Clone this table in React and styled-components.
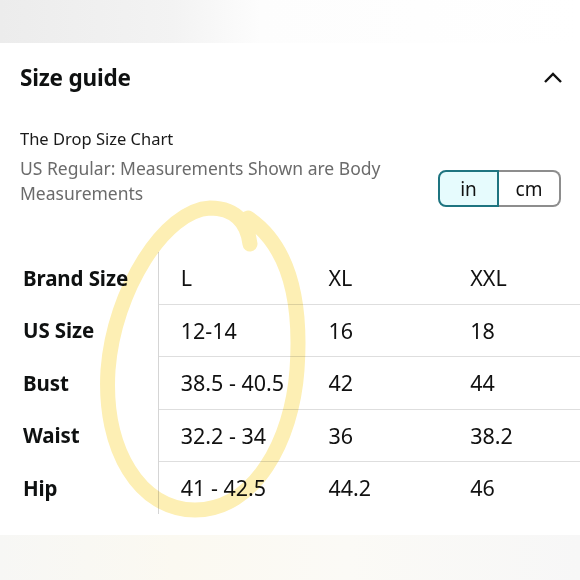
import React from 'react';
import styled, { createGlobalStyle } from 'styled-components';

const GlobalStyle = createGlobalStyle`
  html, body {
    margin: 0;
    padding: 0;
    background: #fff;
  }
  body {
    font-family: "Noto Sans", "Open Sans", Arial, sans-serif;
    color: #111;
  }
`;

const Page = styled.div`
  position: relative;
  width: 580px;
  height: 580px;
  overflow: hidden;
  background: #fff;
`;

const TopBand = styled.div`
  height: 43px;
  background: linear-gradient(90deg, #ececec 0%, #f3f3f3 30%, #fdfdfd 45%, #ffffff 100%);
`;

const BottomBand = styled.div`
  position: absolute;
  left: 0;
  right: 0;
  bottom: 0;
  height: 45px;
  background: linear-gradient(90deg, #f7f7f5 0%, #fbf9f1 30%, #fbfaf6 60%, #f7f7f7 100%);
`;

const HeaderRow = styled.div`
  height: 68px;
  display: flex;
  align-items: center;
  justify-content: space-between;
  padding: 0 16px 0 20px;
`;

const Title = styled.h2`
  margin: 0;
  font-size: 22.5px;
  font-weight: 700;
  color: #0f1111;
  letter-spacing: -0.2px;
`;

const Chevron = styled.svg`
  width: 22px;
  height: 14px;
`;

const InfoRow = styled.div`
  display: flex;
  align-items: flex-start;
  justify-content: space-between;
  padding: 15px 19px 0 20px;
`;

const InfoText = styled.div`
  display: flex;
  flex-direction: column;
  gap: 5px;
`;

const ChartName = styled.div`
  font-size: 16.5px;
  line-height: 25px;
  color: #1a1a1a;
`;

const ChartNote = styled.div`
  width: 390px;
  font-size: 17.5px;
  line-height: 25px;
  color: #6b6b6b;
`;

const Toggle = styled.div`
  display: flex;
  margin-top: 44px;
`;

const UnitButton = styled.div`
  width: ${p => (p.$active ? '57px' : '60px')};
  height: 33px;
  display: flex;
  align-items: center;
  justify-content: center;
  font-size: 19px;
  color: #111;
  background: ${p => (p.$active ? '#e6fbfd' : '#fff')};
  border: 2px solid ${p => (p.$active ? '#1e7480' : '#8d8d8d')};
  border-left-width: ${p => (p.$active ? '2px' : '0')};
  border-radius: ${p => (p.$active ? '8px 0 0 8px' : '0 8px 8px 0')};
`;

const Table = styled.table`
  margin-top: 45px;
  width: 580px;
  border-collapse: collapse;
`;

const Label = styled.th`
  width: 135px;
  height: 51.5px;
  padding: 0 0 0 23px;
  text-align: left;
  font-size: 20.5px;
  font-weight: 700;
  color: #0f1111;
  letter-spacing: -0.1px;
  border-right: 1px solid #d5d5d5;
`;

const Cell = styled.td`
  width: ${p => p.$w}px;
  height: 51.5px;
  padding: 0 0 0 22px;
  font-size: 21.5px;
  color: #111;
  border-top: ${p => (p.$first ? 'none' : '1px solid #dedede')};
`;

const Highlight = styled.svg`
  position: absolute;
  left: 0;
  top: 0;
  pointer-events: none;
  mix-blend-mode: multiply;
`;

const rows = [
  ['Brand Size', 'L', 'XL', 'XXL'],
  ['US Size', '12-14', '16', '18'],
  ['Bust', '38.5 - 40.5', '42', '44'],
  ['Waist', '32.2 - 34', '36', '38.2'],
  ['Hip', '41 - 42.5', '44.2', '46'],
];

const widths = [126, 120, 110];

export default function App() {
  return (
    <>
      <GlobalStyle />
      <Page>
        <TopBand />
        <HeaderRow>
          <Title>Size guide</Title>
          <Chevron viewBox="0 0 22 14">
            <path d="M3 12 L11 4 L19 12" fill="none" stroke="#111" strokeWidth="2.4" />
          </Chevron>
        </HeaderRow>
        <InfoRow>
          <InfoText>
            <ChartName>The Drop Size Chart</ChartName>
            <ChartNote>US Regular: Measurements Shown are Body Measurements</ChartNote>
          </InfoText>
          <Toggle>
            <UnitButton $active>in</UnitButton>
            <UnitButton>cm</UnitButton>
          </Toggle>
        </InfoRow>
        <Table>
          <tbody>
            {rows.map((r, i) => (
              <tr key={r[0]}>
                <Label>{r[0]}</Label>
                {r.slice(1).map((v, j) => (
                  <Cell key={j} $w={widths[j]} $first={i === 0}>{v}</Cell>
                ))}
              </tr>
            ))}
          </tbody>
        </Table>
        <BottomBand />
        <Highlight width="580" height="580" viewBox="0 0 580 580">
          <path
            d="M250 244 C248 228 240 208 210 208 C165 210 114 290 108 370 C103 450 140 510 195 510 C255 510 292 440 297 370 C302 300 288 245 248 218"
            fill="none"
            stroke="#fdefb4"
            strokeWidth="15"
            strokeLinecap="round"
          />
        </Highlight>
      </Page>
    </>
  );
}
